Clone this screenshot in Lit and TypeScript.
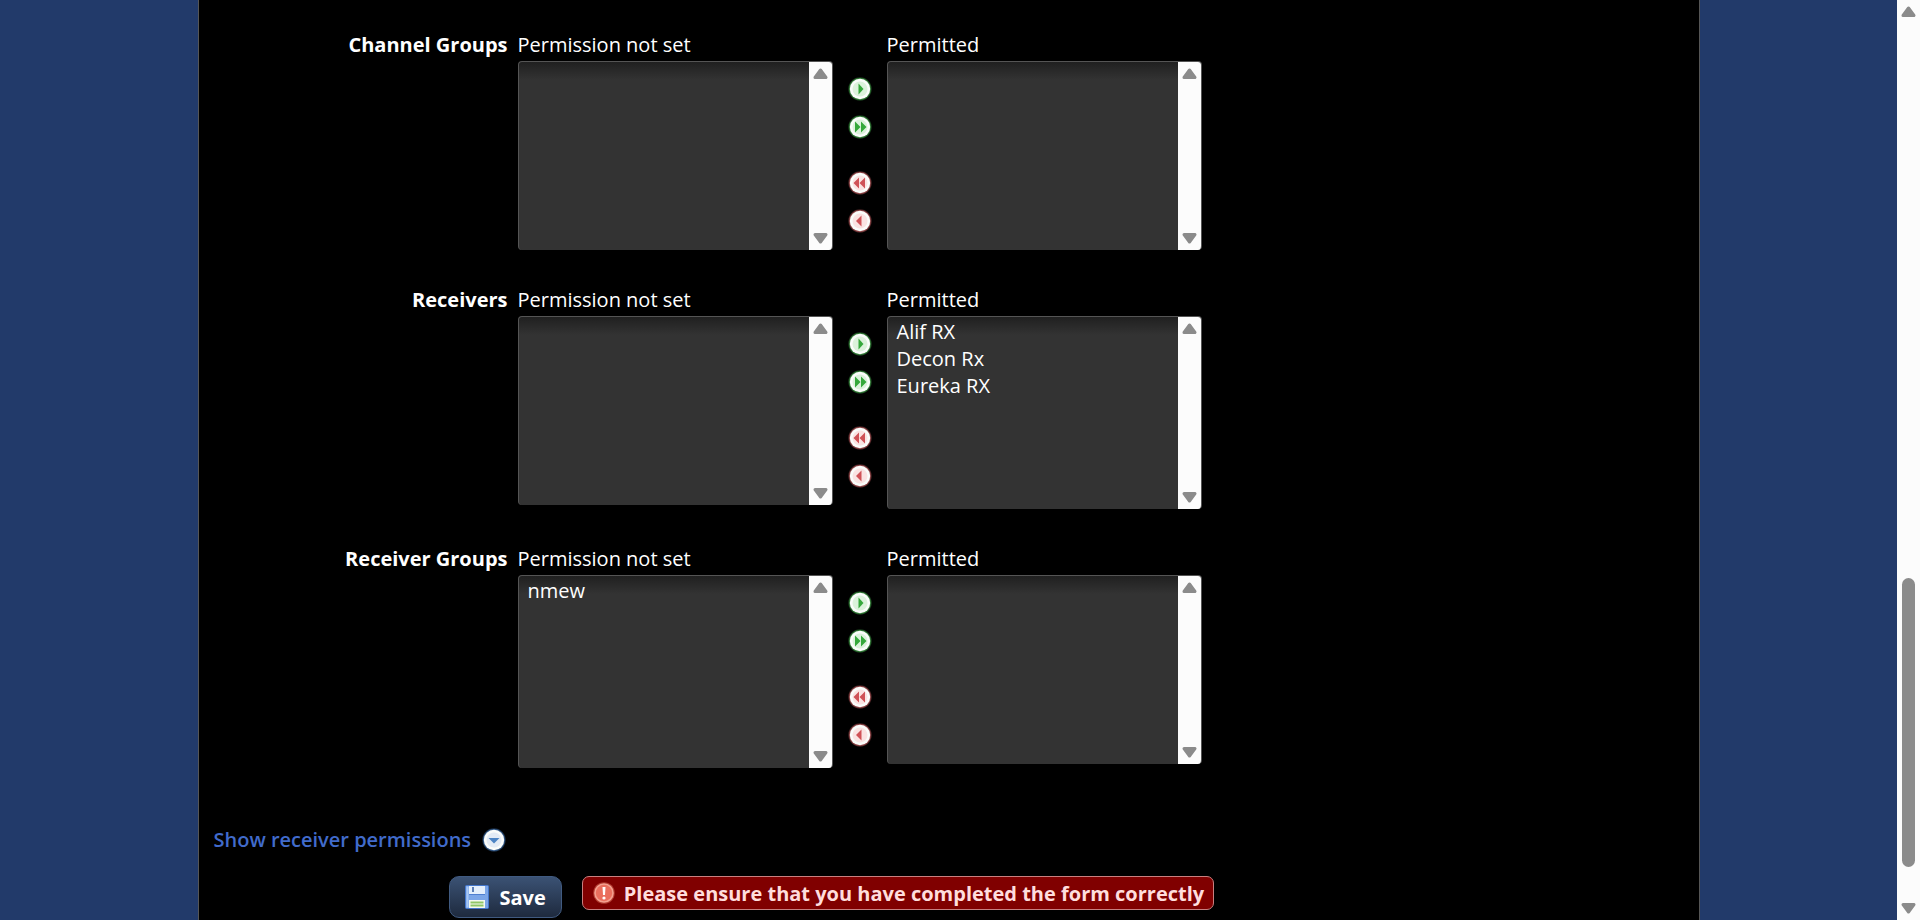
import { LitElement, html, svg, css } from "lit";
import { customElement, property } from "lit/decorators.js";

interface Group {
  id: string;
  label: string;
  unset: string[];
  permitted: string[];
}

const GROUPS: Group[] = [
  { id: "channel-groups", label: "Channel Groups", unset: [], permitted: [] },
  { id: "receivers", label: "Receivers", unset: [], permitted: ["Alif RX", "Decon Rx", "Eureka RX"] },
  { id: "receiver-groups", label: "Receiver Groups", unset: ["nmew"], permitted: [] },
];

const up = html`<svg class="tip" width="23" height="23" viewBox="0 0 23 23" aria-hidden="true"><path d="M11.5 8 L17 15.5 H6 Z" /></svg>`;
const down = html`<svg class="tip" width="23" height="23" viewBox="0 0 23 23" aria-hidden="true"><path d="M11.5 15 L17 7.5 H6 Z" /></svg>`;

@customElement("round-icon")
class RoundIcon extends LitElement {
  @property() kind = "add";

  static styles = css`
    :host { display: block; width: 24px; height: 24px; }
    svg { display: block; }
  `;

  render() {
    const tones: Record<string, string[]> = {
      add: ["#3f9a45", "#d3efd3", "#35a83b"],
      addAll: ["#3f9a45", "#d3efd3", "#35a83b"],
      removeAll: ["#b05558", "#fadcdc", "#cf5257"],
      remove: ["#b05558", "#fadcdc", "#cf5257"],
      expand: ["#3f6ea8", "#dde6f4", "#4d84c4"],
    };
    const shapes: Record<string, string> = {
      add: "M10.5 6.5 L15.5 12 L10.5 17.5 Z",
      addAll: "M7 6.5 L12.5 12 L7 17.5 Z M13 6.5 L18.5 12 L13 17.5 Z",
      removeAll: "M17 6.5 L11.5 12 L17 17.5 Z M11 6.5 L5.5 12 L11 17.5 Z",
      remove: "M13.5 6.5 L8 12 L13.5 17.5 Z",
      expand: "M6.5 10 H17.5 L12 15.5 Z",
    };
    const [ring, tint, mark] = tones[this.kind];
    return html`<svg width="24" height="24" viewBox="0 0 24 24" aria-hidden="true">
      ${svg`
        <circle cx="12" cy="12" r="11.7" fill=${ring} opacity="0.4" />
        <circle cx="12" cy="12" r="10.9" fill=${ring} opacity="0.7" />
        <circle cx="12" cy="12" r="10.2" fill="#fafcfa" />
        <circle cx="12" cy="12" r="7.5" fill=${tint} opacity="0.8" />
        <path d=${shapes[this.kind]} fill=${mark} />
      `}
    </svg>`;
  }
}

@customElement("list-box")
class ListBox extends LitElement {
  @property() caption = "";
  @property({ attribute: false }) items: string[] = [];

  static styles = css`
    :host { display: block; width: 315px; }
    label { display: block; line-height: 28px; margin-bottom: 2px; }
    .frame {
      display: flex;
      box-sizing: border-box;
      height: 189px;
      border: 1px solid #555;
      border-bottom-width: 0;
      border-radius: 4px;
      overflow: hidden;
      background: linear-gradient(#202020, #333 18px);
    }
    .filled { height: 193px; }
    select {
      flex: 1;
      min-width: 0;
      margin: 0;
      padding: 1px 0 0;
      border: 0;
      outline: 0;
      background: transparent;
      color: #fff;
      font: inherit;
      overflow: hidden;
    }
    option { height: 27px; line-height: 27px; min-height: 0; padding: 0 9px; }
    .bar { display: flex; flex-direction: column; justify-content: space-between; width: 23px; background: #fcfcfc; }
    .tip { display: block; fill: #8b8b8b; stroke: #8b8b8b; stroke-width: 3; stroke-linejoin: round; }
  `;

  render() {
    return html`
      <label for="list">${this.caption}</label>
      <div class="frame ${this.items.length ? "filled" : ""}">
        <select id="list" multiple>
          ${this.items.map((item) => html`<option>${item}</option>`)}
        </select>
        <div class="bar">${up}${down}</div>
      </div>
    `;
  }
}

@customElement("app-root")
class AppRoot extends LitElement {
  static styles = css`
    :host {
      display: flex;
      min-height: 100vh;
      background: #223a6a;
      color: #fff;
      font-family: "Trebuchet MS", "Open Sans", sans-serif;
      font-size: 20px;
    }
    .page { flex: 1; display: flex; justify-content: center; min-width: 0; }
    .panel {
      box-sizing: border-box;
      width: 100%;
      max-width: 1502px;
      padding: 31px 15px 0;
      border: solid #555;
      border-width: 0 1px;
      background: #000;
    }
    form { display: flex; flex-direction: column; }
    .row { display: flex; align-items: flex-start; margin-bottom: 36px; }
    .name { width: 294px; margin-right: 10px; text-align: right; font-weight: 700; line-height: 28px; }
    .moves { display: flex; flex-direction: column; align-items: center; gap: 14px; width: 54px; padding-top: 46px; }
    .moves button { padding: 0; border: 0; background: none; cursor: pointer; }
    .moves .apart { margin-top: 18px; }
    .more {
      display: flex;
      align-items: center;
      align-self: flex-start;
      gap: 11px;
      margin-top: 22px;
      line-height: 28px;
      color: #416bcb;
      font-weight: 600;
      text-decoration: none;
    }
    .actions { display: flex; align-items: flex-start; gap: 20px; margin: 22px 0 0 235px; }
    .save {
      display: flex;
      align-items: center;
      gap: 11px;
      height: 42px;
      padding: 0 15px;
      border: 1px solid #405a80;
      border-radius: 10px;
      background: linear-gradient(#3b5274, #1e2a3e);
      color: #fff;
      font: inherit;
      font-weight: 700;
    }
    .error {
      display: flex;
      align-items: center;
      gap: 8px;
      box-sizing: border-box;
      height: 34px;
      padding: 0 9px;
      border: 1px solid #c88080;
      border-radius: 7px;
      background: #800000;
      color: #fdd;
      font-weight: 700;
    }
    .scroll { display: flex; flex-direction: column; align-items: center; width: 23px; background: #fcfcfc; }
    .before { flex: 555; }
    .thumb { flex: 289; width: 13px; border-radius: 7px; background: #8b8b8b; }
    .after { flex: 30; }
    .tip { display: block; fill: #8b8b8b; stroke: #8b8b8b; stroke-width: 3; stroke-linejoin: round; }
  `;

  private row(group: Group) {
    return html`
      <div class="row" role="group" aria-labelledby=${group.id}>
        <div class="name" id=${group.id}>${group.label}</div>
        <list-box caption="Permission not set" .items=${group.unset}></list-box>
        <div class="moves">
          <button type="button" aria-label="Permit selected"><round-icon kind="add"></round-icon></button>
          <button type="button" aria-label="Permit all"><round-icon kind="addAll"></round-icon></button>
          <button type="button" class="apart" aria-label="Remove all"><round-icon kind="removeAll"></round-icon></button>
          <button type="button" aria-label="Remove selected"><round-icon kind="remove"></round-icon></button>
        </div>
        <list-box caption="Permitted" .items=${group.permitted}></list-box>
      </div>
    `;
  }

  render() {
    return html`
      <main class="page">
        <div class="panel">
          <form>
            ${GROUPS.map((group) => this.row(group))}
            <a class="more" href="#receiver-permissions">Show receiver permissions <round-icon kind="expand"></round-icon></a>
            <div class="actions">
              <button class="save" type="button">
                <svg width="24" height="24" viewBox="0 0 24 24" aria-hidden="true">
                  <rect x="0.5" y="0.5" width="23" height="23" rx="1" fill="#7ba6e8" stroke="#4477cc" />
                  <rect x="1.5" y="1.5" width="2" height="21" fill="#a9c8f4" />
                  <rect x="4" y="1" width="16" height="8" fill="#e4effc" />
                  <rect x="7" y="2" width="2" height="5" fill="#5c7fb8" />
                  <rect x="4" y="9" width="16" height="1" fill="#4f7fd0" />
                  <rect x="4" y="15" width="16" height="8" fill="#f4f9ee" />
                  <rect x="5.5" y="16.5" width="13" height="2" fill="#8fc766" />
                  <rect x="5.5" y="19.5" width="13" height="2" fill="#8fc766" />
                </svg>
                Save
              </button>
              <div class="error" role="alert">
                <svg width="24" height="24" viewBox="0 0 24 24" aria-hidden="true">
                  <circle cx="12" cy="12" r="10.8" fill="#c75445" opacity="0.7" />
                  <circle cx="12" cy="12" r="9.8" fill="#f4a090" />
                  <circle cx="12" cy="12" r="8.2" fill="#ea6f5e" />
                  <path d="M10.5 6 H13.5 L13 14 H11 Z" fill="#fff" />
                  <circle cx="12" cy="17" r="1.6" fill="#fff" />
                </svg>
                Please ensure that you have completed the form correctly
              </div>
            </div>
          </form>
        </div>
      </main>
      <div class="scroll" aria-hidden="true">
        ${up}
        <div class="before"></div>
        <div class="thumb"></div>
        <div class="after"></div>
        ${down}
      </div>
    `;
  }
}
